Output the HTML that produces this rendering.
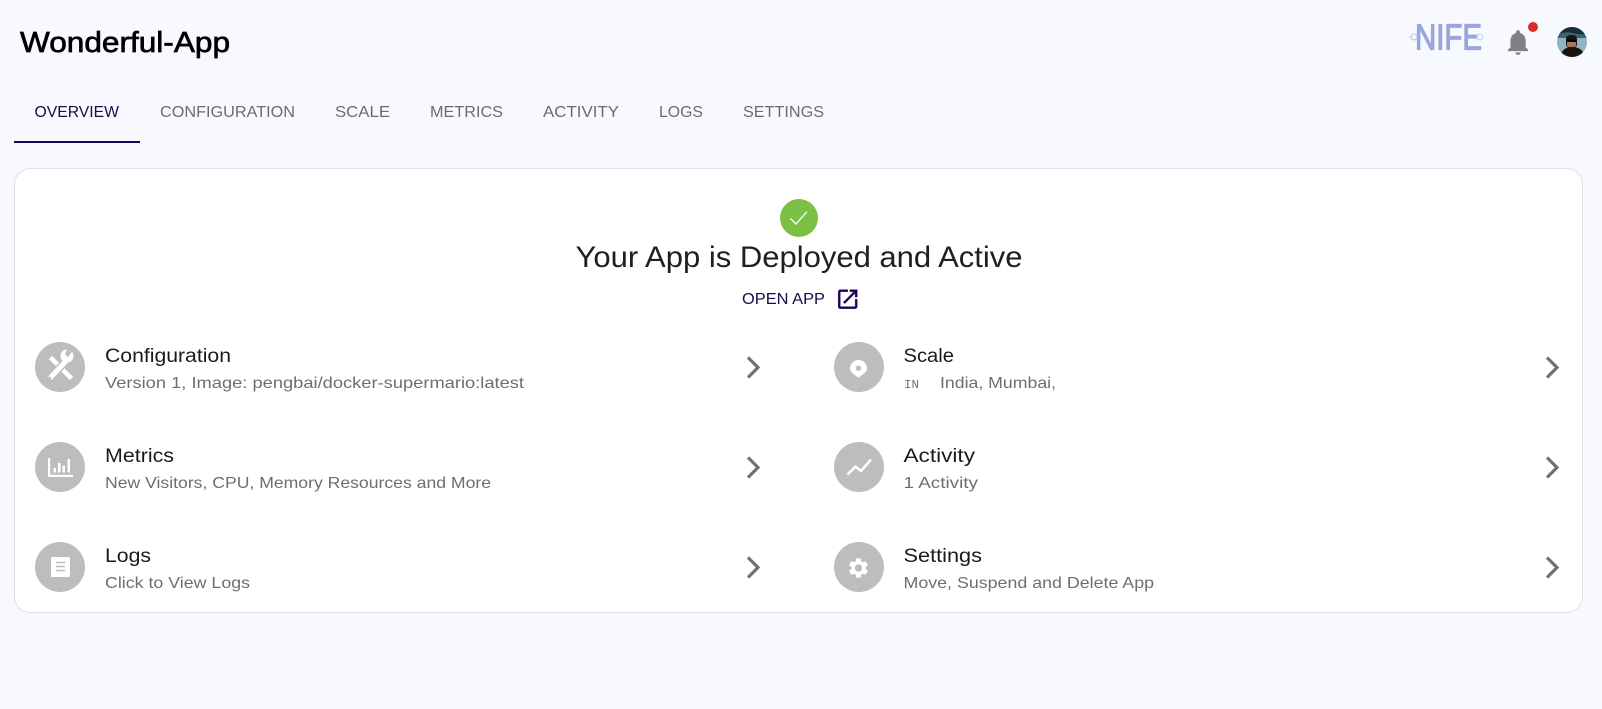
<!DOCTYPE html>
<html lang="en">
<head>
<meta charset="utf-8">
<title>Wonderful-App</title>
<style>
html,body{margin:0;padding:0;width:1602px;height:709px;overflow:hidden;background:#f8f9fe}
svg{display:block}
text{font-family:"Liberation Sans",Arial,sans-serif}
.tab{font-size:16px;fill:#6c6c6c}
.t{font-size:19px;fill:#1a1a1a}
.s{font-size:16px;fill:#6e6e6e}
.c{fill:#bdbdbd}
.w{fill:#fff}
.chev{fill:none;stroke:#717171;stroke-width:3.200}
</style>
</head>
<body>
<svg width="1602" height="709" viewBox="0 0 1602 709" xmlns="http://www.w3.org/2000/svg">
<rect width="1602" height="709" fill="#f8f9fe"/>

<text x="20" y="52" font-size="29" fill="#000" stroke="#000" stroke-width=".7" textLength="210" lengthAdjust="spacingAndGlyphs">Wonderful-App</text>

<!-- logo -->
<g>
<text x="1415" y="49.500" font-size="36" fill="#98a6dc" stroke="#98a6dc" stroke-width="1.200" stroke-linejoin="round" textLength="67" lengthAdjust="spacingAndGlyphs">NIFE</text>
<path d="M1407 37h7" stroke="#cfe0f5" stroke-width="1" fill="none"/>
<circle cx="1414" cy="37" r="3" fill="#f8f9fe" stroke="#a8cdf0"/>
<circle cx="1480" cy="37" r="3" fill="#f8f9fe" stroke="#a8dcf0"/>
</g>

<!-- bell -->
<path transform="translate(1502.800 27) scale(1.27)" fill="#808080" d="M12 22c1.100 0 2-.9 2-2h-4c0 1.100.89 2 2 2zm6-6v-5c0-3.070-1.640-5.640-4.500-6.320V4c0-.83-.67-1.500-1.500-1.500s-1.500.67-1.500 1.500v.68C7.630 5.360 6 7.920 6 11v5l-2 2v1h16v-1l-2-2z"/>
<circle cx="1533" cy="27" r="5" fill="#de2b2b"/>

<!-- avatar -->
<defs><clipPath id="av"><circle cx="1572" cy="42" r="15"/></clipPath></defs>
<g clip-path="url(#av)">
<rect x="1557" y="27" width="30" height="30" fill="#8fb4c4"/>
<rect x="1557" y="27" width="30" height="8" fill="#16303f"/>
<path d="M1557 35q8-4 15-2t15 1v4h-30z" fill="#3e6577"/>
<path d="M1560 57q2-9 10-10h4q9 1 11 10z" fill="#1b1512"/>
<rect x="1566" y="35" width="11" height="13" rx="4" fill="#191513"/>
<rect x="1567" y="41" width="9" height="6" rx="2" fill="#a27a60"/>
<rect x="1567" y="39.500" width="9" height="2.500" fill="#050505"/>
</g>

<!-- tabs -->
<text class="tab" x="34.500" y="117" style="fill:#1d0a4a" textLength="84.500" lengthAdjust="spacingAndGlyphs">OVERVIEW</text>
<text class="tab" x="160" y="117" textLength="135" lengthAdjust="spacingAndGlyphs">CONFIGURATION</text>
<text class="tab" x="335" y="117" textLength="55" lengthAdjust="spacingAndGlyphs">SCALE</text>
<text class="tab" x="430" y="117" textLength="73" lengthAdjust="spacingAndGlyphs">METRICS</text>
<text class="tab" x="543" y="117" textLength="76" lengthAdjust="spacingAndGlyphs">ACTIVITY</text>
<text class="tab" x="659" y="117" textLength="44" lengthAdjust="spacingAndGlyphs">LOGS</text>
<text class="tab" x="743" y="117" textLength="81" lengthAdjust="spacingAndGlyphs">SETTINGS</text>
<rect x="14" y="141" width="126" height="2" fill="#1d0259"/>

<!-- card -->
<rect x="14.500" y="168.500" width="1568" height="444" rx="16" fill="#fff" stroke="#e0e0e0"/>

<circle cx="799" cy="218" r="19" fill="#7bc043"/>
<path d="M790.500 218.500l5.500 5.500 11-12.500" fill="none" stroke="#fff" stroke-width="1.300"/>
<text x="575.500" y="267" font-size="30" fill="#1f1f1f" textLength="447" lengthAdjust="spacingAndGlyphs">Your App is Deployed and Active</text>
<text x="742" y="304" font-size="16" fill="#1d0a4a" textLength="83" lengthAdjust="spacingAndGlyphs">OPEN APP</text>
<path transform="translate(835 286.500) scale(1.06)" fill="#1d0259" stroke="#1d0259" stroke-width=".3" d="M19 19H5V5h7V3H5c-1.110 0-2 .9-2 2v14c0 1.100.89 2 2 2h14c1.100 0 2-.9 2-2v-7h-2v7zM14 3v2h3.590l-9.830 9.830 1.410 1.410L19 6.410V10h2V3h-7z"/>

<!-- rows: left -->
<circle class="c" cx="60" cy="367" r="25"/>
<path d="M50.500 357.500l21 21" fill="none" stroke="#fff" stroke-width="4.500"/>
<path d="M51 377l15-16" fill="none" stroke="#bdbdbd" stroke-width="7.500"/>
<path d="M51 377l15-16" fill="none" stroke="#fff" stroke-width="5" stroke-linecap="round"/>
<circle class="w" cx="67" cy="356" r="6.500"/>
<path class="c" d="M68 357l7-9h-7.500l-2.500 6.500z"/>
<circle class="c" cx="49.800" cy="378" r="1.300"/>
<text class="t" x="105" y="362" textLength="126" lengthAdjust="spacingAndGlyphs">Configuration</text>
<text class="s" x="105" y="388" textLength="419" lengthAdjust="spacingAndGlyphs">Version 1, Image: pengbai/docker-supermario:latest</text>
<path class="chev" d="M748 357.500l10 10-10 10"/>

<circle class="c" cx="60" cy="467" r="25"/>
<path class="w" d="M48 458h2.200v16.800H73V477H48z"/>
<path class="w" d="M53.500 468h2.500v4.500h-2.500zM58 463h2.500v9.500H58zM62.500 465.500H65v7h-2.500zM67.500 459H70v13.500h-2.500z"/>
<text class="t" x="105" y="462" textLength="69" lengthAdjust="spacingAndGlyphs">Metrics</text>
<text class="s" x="105" y="488" textLength="386" lengthAdjust="spacingAndGlyphs">New Visitors, CPU, Memory Resources and More</text>
<path class="chev" d="M748 457.500l10 10-10 10"/>

<circle class="c" cx="60" cy="567" r="25"/>
<rect class="w" x="51" y="557" width="19" height="20" rx="1"/>
<path d="M56 562.500h9M56 566.500h9M56 570.500h9" stroke="#bdbdbd" stroke-width="1.600"/>
<text class="t" x="105" y="562" textLength="46" lengthAdjust="spacingAndGlyphs">Logs</text>
<text class="s" x="105" y="588" textLength="145" lengthAdjust="spacingAndGlyphs">Click to View Logs</text>
<path class="chev" d="M748 557.500l10 10-10 10"/>

<!-- rows: right -->
<circle class="c" cx="859" cy="367" r="25"/>
<path class="w" fill-rule="evenodd" d="M858.500 360a8.500 8.500 0 0 1 8.500 8.500c0 4-6 7-8.500 9.500-2.500-2.500-8.500-5.500-8.500-9.500a8.500 8.500 0 0 1 8.500-8.500zm0 5.500a2.700 2.700 0 1 0 0 5.400 2.700 2.700 0 0 0 0-5.400z"/>
<text class="t" x="903.500" y="362" textLength="50.500" lengthAdjust="spacingAndGlyphs">Scale</text>
<text x="904" y="388" font-size="12" fill="#6e6e6e" textLength="15" lengthAdjust="spacingAndGlyphs" style="font-family:'Liberation Mono',monospace">IN</text>
<text class="s" x="940" y="388" textLength="116" lengthAdjust="spacingAndGlyphs">India, Mumbai,</text>
<path class="chev" d="M1547 357.500l10 10-10 10"/>

<circle class="c" cx="859" cy="467" r="25"/>
<path d="M847.500 474.500l8-8 5.500 4.500 10-11.500" fill="none" stroke="#fff" stroke-width="2.500"/>
<text class="t" x="903.500" y="462" textLength="71.500" lengthAdjust="spacingAndGlyphs">Activity</text>
<text class="s" x="903.500" y="488" textLength="74.500" lengthAdjust="spacingAndGlyphs">1 Activity</text>
<path class="chev" d="M1547 457.500l10 10-10 10"/>

<circle class="c" cx="859" cy="567" r="25"/>
<path transform="translate(846.500 556)" class="w" d="M19.140 12.940c.04-.3.06-.61.06-.94 0-.32-.02-.64-.07-.94l2.030-1.580c.18-.14.23-.41.12-.61l-1.920-3.320c-.12-.22-.37-.29-.59-.22l-2.390.96c-.5-.38-1.030-.7-1.620-.94l-.36-2.540c-.04-.24-.24-.41-.48-.41h-3.840c-.24 0-.43.17-.47.41l-.36 2.540c-.59.24-1.130.57-1.620.94l-2.390-.96c-.22-.08-.47 0-.59.22L2.740 8.870c-.12.21-.08.47.12.61l2.030 1.580c-.05.3-.09.63-.09.94s.02.64.07.94l-2.030 1.580c-.18.14-.23.41-.12.61l1.920 3.320c.12.22.37.29.59.22l2.390-.96c.5.38 1.030.7 1.620.94l.36 2.540c.05.24.24.41.48.41h3.840c.24 0 .44-.17.47-.41l.36-2.540c.59-.24 1.130-.56 1.620-.94l2.390.96c.22.08.47 0 .59-.22l1.920-3.320c.12-.22.07-.47-.12-.61l-2.010-1.580zM12 15.600c-1.980 0-3.600-1.620-3.600-3.600s1.620-3.600 3.600-3.600 3.600 1.620 3.600 3.600-1.620 3.600-3.600 3.600z"/>
<text class="t" x="903.500" y="562" textLength="78.500" lengthAdjust="spacingAndGlyphs">Settings</text>
<text class="s" x="903.500" y="588" textLength="250.500" lengthAdjust="spacingAndGlyphs">Move, Suspend and Delete App</text>
<path class="chev" d="M1547 557.500l10 10-10 10"/>
</svg>
</body>
</html>
